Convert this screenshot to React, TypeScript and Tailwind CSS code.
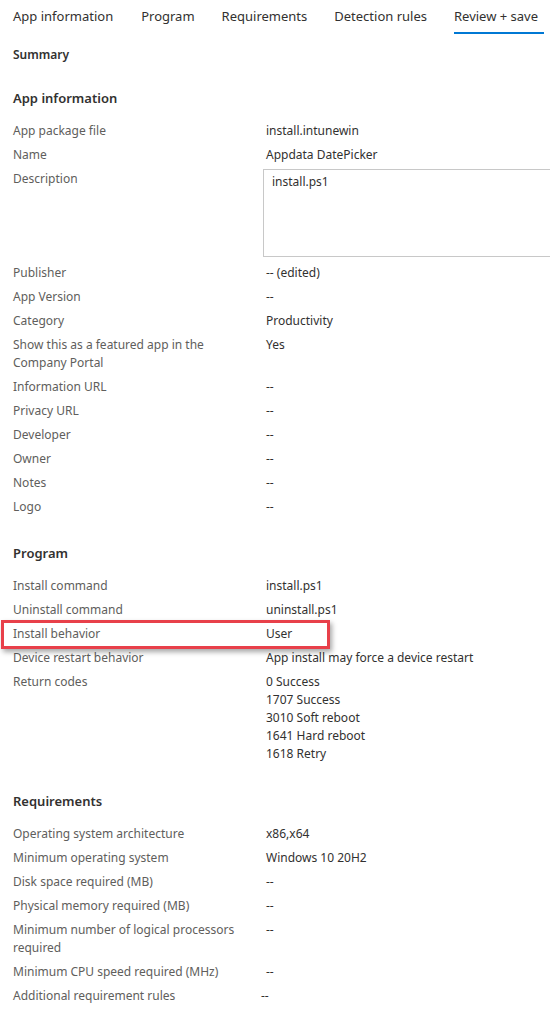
import * as React from 'react';

type Row = { label: string; value: React.ReactNode; valueClass?: string };

const tabs = ['App information', 'Program', 'Requirements', 'Detection rules', 'Review + save'];

const appInfo: Row[] = [
  { label: 'App package file', value: 'install.intunewin' },
  { label: 'Name', value: 'Appdata DatePicker' },
  {
    label: 'Description',
    value: (
      <div className="-ml-[3px] -mt-[1px] mb-[1px] h-[88px] w-[300px] border border-[#c8c8c8] pl-[8px] pt-[3px]">
        install.ps1
      </div>
    ),
  },
  { label: 'Publisher', value: '-- (edited)' },
  { label: 'App Version', value: '--' },
  { label: 'Category', value: 'Productivity' },
  { label: 'Show this as a featured app in the Company Portal', value: 'Yes' },
  { label: 'Information URL', value: '--' },
  { label: 'Privacy URL', value: '--' },
  { label: 'Developer', value: '--' },
  { label: 'Owner', value: '--' },
  { label: 'Notes', value: '--' },
  { label: 'Logo', value: '--' },
];

const program: Row[] = [
  { label: 'Install command', value: 'install.ps1' },
  { label: 'Uninstall command', value: 'uninstall.ps1' },
  { label: 'Install behavior', value: 'User' },
  { label: 'Device restart behavior', value: 'App install may force a device restart' },
  {
    label: 'Return codes',
    value: (
      <div className="flex flex-col">
        <span>0 Success</span>
        <span>1707 Success</span>
        <span>3010 Soft reboot</span>
        <span>1641 Hard reboot</span>
        <span>1618 Retry</span>
      </div>
    ),
  },
];

const requirements: Row[] = [
  { label: 'Operating system architecture', value: 'x86,x64' },
  { label: 'Minimum operating system', value: 'Windows 10 20H2' },
  { label: 'Disk space required (MB)', value: '--' },
  { label: 'Physical memory required (MB)', value: '--' },
  { label: 'Minimum number of logical processors required', value: '--' },
  { label: 'Minimum CPU speed required (MHz)', value: '--' },
  { label: 'Additional requirement rules', value: '--', valueClass: '-ml-[5px]' },
];

function Section({ title, rows, className = '' }: { title: string; rows: Row[]; className?: string }) {
  return (
    <section className={className}>
      <h2 className="mb-[14px] text-[13px] leading-[20px] font-semibold text-[#323130]">{title}</h2>
      <div className="grid grid-cols-[240px_1fr] gap-x-[13px]">
        {rows.map((r) => (
          <React.Fragment key={r.label}>
            <div className="pb-[6px] text-[#605e5c]">{r.label}</div>
            <div className={`pb-[6px] text-[#323130] ${r.valueClass ?? ''}`}>{r.value}</div>
          </React.Fragment>
        ))}
      </div>
    </section>
  );
}

export default function App() {
  return (
    <div
      className="relative h-[1027px] w-[550px] overflow-hidden bg-white text-[12px] leading-[18px]"
      style={{ fontFamily: '"Segoe UI", "Noto Sans", "Open Sans", sans-serif' }}
    >
      {/* Wizard tabs */}
      <nav className="flex gap-[27px] pl-[13px] pt-[6px]">
        {tabs.map((t, i) => (
          <div key={t} className={`flex flex-col ${i === 1 ? 'ml-[1px]' : ''}`}>
            <span className="text-[13px] leading-[20px] whitespace-nowrap text-[#323130]">{t}</span>
            <span
              className={`mt-[6px] h-[2px] ${i === tabs.length - 1 ? '-mr-[6px] bg-[#0078d4]' : 'bg-transparent'}`}
            />
          </div>
        ))}
      </nav>

      <div className="px-[13px]">
        <h1 className="mt-[11px] text-[12px] leading-[20px] font-semibold text-[#323130]">Summary</h1>
        <Section title="App information" rows={appInfo} className="mt-[23px]" />
        <Section title="Program" rows={program} className="mt-[21px]" />
        <Section title="Requirements" rows={requirements} className="mt-[22px]" />
      </div>

      {/* highlight annotation */}
      <div className="pointer-events-none absolute left-[1px] top-[620px] h-[29px] w-[329px] border-[3px] border-[#e8404a] shadow-[2px_3px_5px_rgba(0,0,0,0.35)]" />
    </div>
  );
}
